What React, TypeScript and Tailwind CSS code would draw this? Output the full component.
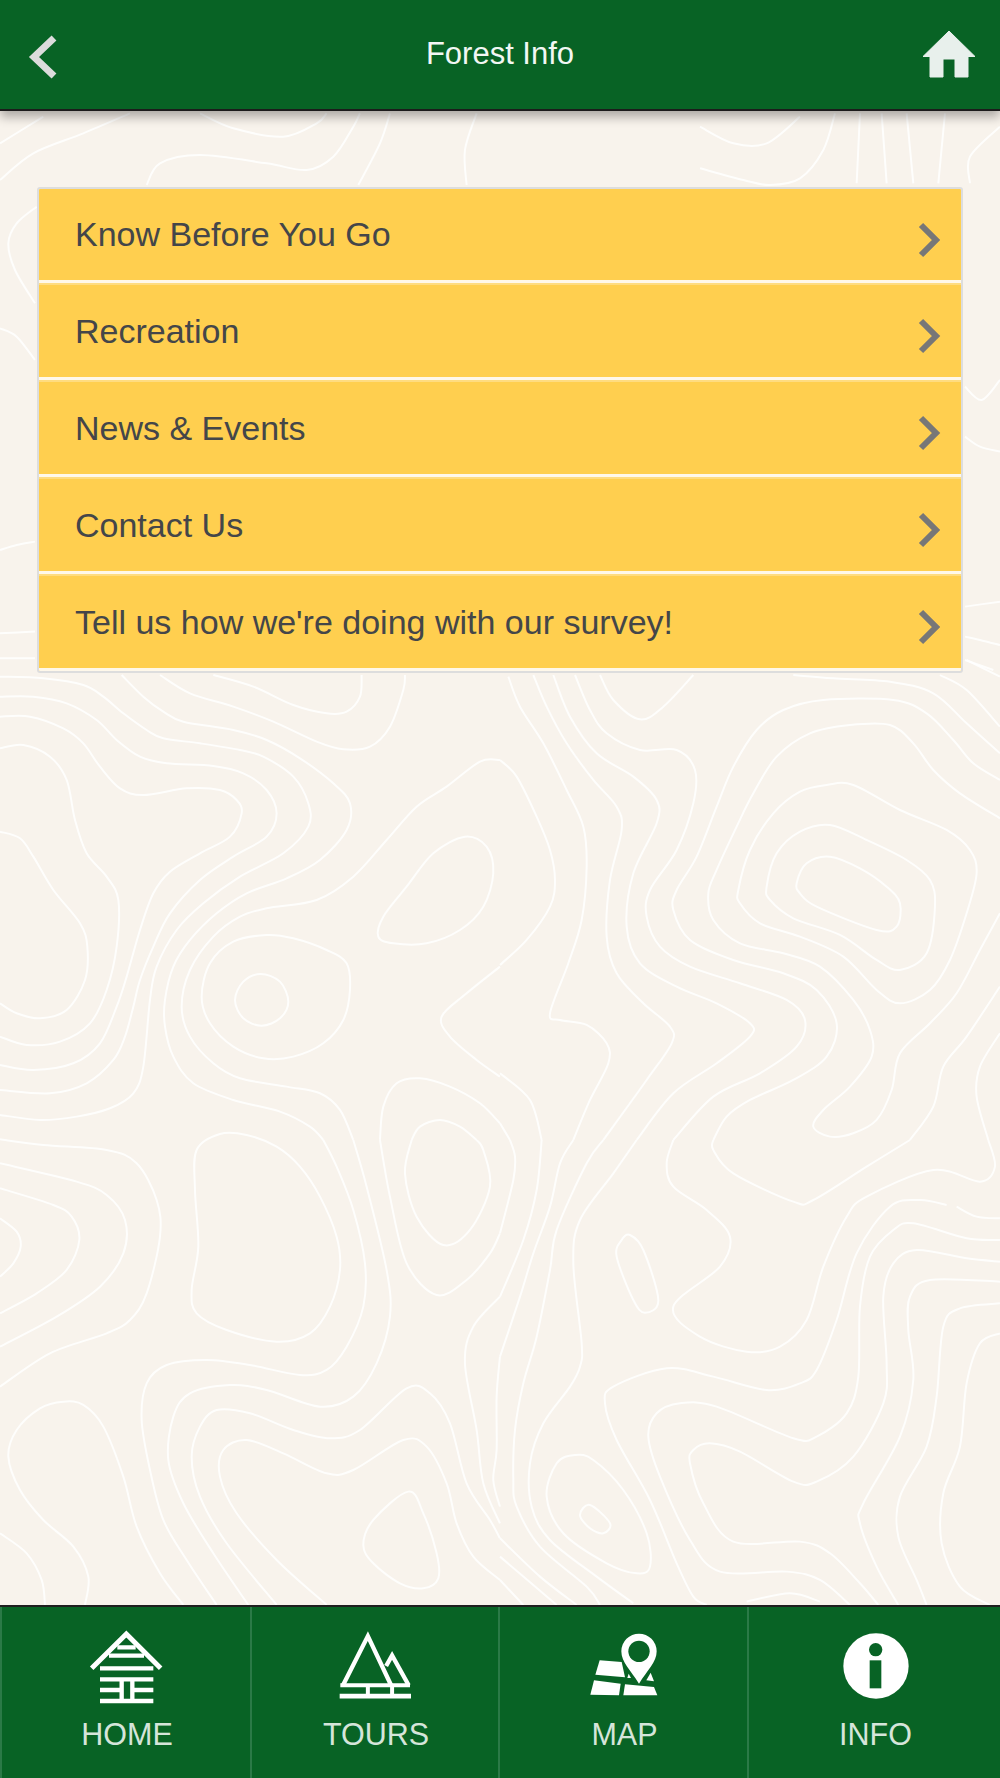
import React from "react";

// contour lines traced from the reference, each crop has its own origin at 1/3 scale
const contours: { x: number; y: number; lines: string[] }[] = [
  {
    x: 0,
    y: 0,
    lines: [
      "0,430 130,350",
      "0,540 100,460 250,400 390,340",
      "600,340 700,385 850,410 950,370 980,340",
      "440,555 480,490 600,465 800,490 920,510 1000,470 1060,380 1080,340",
      "1075,555 1140,430 1170,340",
      "1400,555 1395,450 1430,340",
    ],
  },
  {
    x: 700,
    y: 0,
    lines: [
      "0,380 100,430 200,430 300,350",
      "0,505 130,540 210,555 300,535 370,450 405,340",
      "470,550 480,340",
      "560,550 545,340",
      "640,550 620,340",
      "715,550 735,340",
      "810,550 810,470 900,380",
    ],
  },
  {
    x: 0,
    y: 190,
    lines: [
      "110,50 50,100 25,160 45,240 105,340",
      "0,415 50,440 105,510",
      "0,1080 50,1065 105,1055",
      "0,1330 105,1325",
      "0,1405 105,1405",
    ],
  },
  {
    x: 960,
    y: 190,
    lines: [
      "15,590 65,630 120,570",
      "15,740 60,770 120,785",
      "15,1250 120,1235",
      "15,1340 60,1350 120,1365",
      "15,1410 100,1440",
    ],
  },
  {
    x: 0,
    y: 660,
    lines: [
      "0,50 130,55 250,75 310,110 370,160 440,210 490,235 600,250 720,270 790,290 880,350 925,430 925,500 850,580 720,650 610,730 530,810 470,920 450,1020 430,1220 400,1300 330,1345 230,1370 120,1380 0,1365",
      "0,110 100,110 200,130 290,180 350,240 420,290 500,310 640,318 730,340 800,390 830,460 800,530 700,590 600,660 510,760 460,860 420,960 400,1040 375,1130 340,1200 260,1270 150,1300 0,1290",
      "0,170 90,170 190,205 250,250 300,320 360,385 430,405 560,385 660,390 710,420 725,460 690,530 600,580 510,635 460,700 420,810 380,950 350,1040 300,1150 220,1210 100,1230 0,1215",
      "0,265 70,255 150,290 200,360 225,480 260,580 320,650 355,720 350,860 320,990 270,1090 180,1145 80,1155 0,1130",
      "0,515 60,535 100,590 160,690 240,790 262,860 255,960 200,1050 120,1075 50,1060 0,1030",
      "365,45 430,110 490,155 550,185 700,210 800,240 900,295 1000,370 1050,430 1040,510 960,600 860,655 740,700 650,760 570,840 520,920 495,1020 495,1100 520,1190 580,1270 700,1320 840,1355 930,1400 970,1440",
      "480,45 570,100 700,140 820,185 950,245 1030,268 1110,260 1170,200 1210,90 1215,45",
      "1500,300 1440,305 1340,380 1250,440 1160,540 1060,650 950,720 800,745 720,770 640,830 570,930 545,1040 570,1130 640,1210 720,1255 860,1280 960,1300 1020,1350 1060,1440",
      "640,45 760,80 880,135 980,160 1040,155 1080,110 1085,45",
      "800,825 880,835 980,870 1040,910 1050,990 1030,1080 970,1150 880,1190 790,1195 700,1160 630,1090 605,1010 630,910 700,845 z",
      "782,942 840,965 865,1025 840,1075 785,1097 730,1075 705,1020 730,965 z",
      "1395,530 1460,560 1480,640 1450,740 1380,810 1280,850 1180,850 1135,830 1150,770 1220,680 1300,580 z",
      "1500,920 1400,1000 1325,1070 1350,1130 1430,1200 1500,1250",
      "1140,1440 1150,1340 1190,1270 1260,1255 1350,1280 1440,1330 1500,1390",
      "1235,1440 1260,1400 1320,1380 1380,1400 1430,1440",
    ],
  },
  {
    x: 500,
    y: 660,
    lines: [
      "0,300 50,350 110,470 150,570 165,660 150,740 80,840 0,915",
      "25,50 60,140 130,250 200,390 250,500 260,620 245,780 205,910 150,1060 180,1080 260,1095 320,1150 325,1210 270,1320 220,1440",
      "100,45 140,140 200,250 280,360 350,440 365,510 330,660 320,830 350,940 430,1030 510,1100 515,1150 440,1260 310,1440",
      "160,45 210,170 290,280 400,350 470,420 470,490 400,640 380,800 420,910 530,980 650,1030 750,1090 750,1130 650,1210 520,1300 410,1440",
      "225,45 270,150 320,220 420,270 530,270 585,330 580,430 530,570 450,690 440,770 480,860 570,920 720,970 860,1020 915,1080 890,1160 780,1240 640,1310 520,1440",
      "300,45 340,120 420,178 490,140 580,45",
      "880,45 1000,55 1170,65 1300,100 1400,190 1500,280",
      "1320,45 1400,90 1500,200",
      "1400,0 1500,50",
      "1500,360 1420,310 1360,240 1280,160 1180,120 970,120 850,150 770,210 700,320 650,440 590,590 530,690 520,750 570,840 700,900 850,940 950,990 1010,1090 980,1190 880,1260 750,1320 680,1370 640,1440",
      "1500,475 1380,400 1300,330 1240,250 1170,195 1050,195 930,220 830,290 760,400 710,500 650,630 625,700 640,780 720,850 850,880 960,920 1060,1020 1110,1110 1115,1190 1050,1280 970,1350 940,1400 990,1430 1060,1420 1130,1380 1175,1290 1200,1180 1290,1090 1370,1000 1440,870 1500,760",
      "715,690 750,570 820,460 900,395 980,375 1060,375 1200,450 1340,510 1410,570 1430,640 1400,760 1350,900 1290,990 1200,1030 1130,990 1030,890 900,830 780,790 720,730 z",
      "800,680 830,580 900,515 990,495 1100,540 1220,600 1290,660 1305,740 1280,880 1200,930 1130,900 1020,825 880,775 810,720 z",
      "890,670 920,610 990,590 1080,625 1160,680 1200,730 1190,800 1130,810 950,740 900,700 z",
      "1500,980 1400,1130 1330,1220 1300,1340 1230,1440",
      "1500,1120 1440,1220 1430,1310 1465,1440",
      "0,1240 90,1320 125,1440",
      "0,1390 30,1440",
    ],
  },
  {
    x: 0,
    y: 1130,
    lines: [
      "0,28 130,45 320,60 410,100 470,210 480,320 440,490 390,570 320,610 150,670 0,770",
      "0,100 230,155 320,195 375,270 370,370 300,470 170,560 0,650",
      "0,175 160,225 215,260 238,330 200,420 110,490 0,550",
      "0,265 50,305 62,350 40,400 0,440",
      "660,12 740,15 830,50 900,110 960,200 1010,320 1020,420 990,530 930,610 830,635 680,600 590,550 575,480 595,350 585,180 590,60 z",
      "970,30 1010,110 1060,240 1095,400 1090,530 1040,650 980,720 900,735 750,705 620,690 500,705 440,760 425,870 450,1020 490,1170 560,1290 650,1425",
      "1060,30 1100,170 1160,420 1170,560 1130,700 1060,800 960,830 800,780 690,765 570,790 520,860 505,990 550,1120 640,1270 745,1425",
      "1140,30 1170,200 1220,400 1310,495 1400,450 1470,370 1500,310",
      "1235,30 1215,130 1250,260 1330,345 1410,300 1470,170 1450,60 1430,30",
      "1500,1225 1470,1170 1400,1060 1350,880 1290,790 1220,775 1080,900 990,925 880,900 750,850 650,840 600,890 575,980 600,1100 680,1240 830,1425",
      "1500,1350 1420,1280 1370,1180 1340,1060 1280,950 1210,930 1060,1020 980,1030 850,970 740,930 670,960 660,1040 710,1150 830,1290 980,1425",
      "1225,1085 1270,1150 1310,1270 1315,1345 1270,1375 1200,1360 1120,1300 1090,1245 1120,1170 z",
      "255,1425 265,1340 220,1250 130,1170 60,1080 25,980 50,900 120,835 190,815 250,825 310,890 370,1040 410,1190 480,1330 550,1425",
      "0,1210 80,1270 125,1350 135,1425",
      "1500,500 1420,590 1395,700 1430,900 1450,1060 1500,1180",
      "1500,680 1490,800 1490,960 1480,1050 1500,1130",
    ],
  },
  {
    x: 500,
    y: 1130,
    lines: [
      "0,310 40,150 45,80 30,30",
      "125,30 110,180 70,330 0,500",
      "220,30 180,100 150,230 100,370 60,500 0,680",
      "310,30 260,100 170,300 150,420 110,620 70,760 45,900 40,1050 50,1130 120,1250 260,1370 300,1425",
      "410,30 340,130 240,270 220,400 245,640 240,710 210,770 130,880 90,1000 95,1130 150,1230 290,1340 400,1420",
      "520,30 500,100 520,170 620,240 690,320 660,410 520,530 600,620 740,665 840,650 920,570 970,410 1040,260 1100,200 1300,120 1440,155 1485,110 1465,30",
      "640,30 640,60 700,130 880,215 940,210 1100,110 1230,30",
      "620,1425 580,1400 530,1300 450,1110 350,930 315,820 340,770 500,715 640,740 800,780 900,760 950,720 1010,570 1070,370 1170,230 1260,210 1340,225",
      "1370,230 1430,260 1500,265",
      "1050,1425 960,1350 860,1325 660,1325 570,1230 480,1040 445,920 470,850 540,820 650,830 880,925 950,920 1040,850 1075,740 1080,530 1110,380 1180,300 1240,280 1400,325 1500,330",
      "1135,1425 1080,1360 990,1270 900,1235 700,1235 610,1120 570,1000 580,960 630,940 720,965 880,1055 950,1055 1060,980 1150,820 1160,700 1150,500 1180,400 1250,360 1400,385 1500,395",
      "1500,455 1290,450 1230,500 1225,600 1240,750 1200,920 1090,1120 1080,1180 1130,1310 1195,1425",
      "1500,520 1380,535 1330,590 1310,800 1280,950 1200,1100 1195,1220 1250,1350 1280,1425",
      "1500,610 1440,640 1400,760 1380,950 1330,1090 1325,1240 1380,1370 1470,1425",
      "390,315 430,360 475,510 435,548 400,510 350,380 365,330 z",
      "225,975 280,990 370,1080 440,1210 450,1310 410,1330 320,1300 190,1210 140,1100 170,1000 z",
      "270,1125 330,1180 310,1210 270,1195 240,1155 z",
      "0,1225 120,1340 230,1425",
      "0,1280 170,1425",
      "0,1350 70,1425",
      "740,1415 870,1390 960,1415",
    ],
  },
];

// catmull-rom through the traced points
function smooth(line: string) {
  const closed = line.endsWith("z");
  const p = line
    .replace("z", "")
    .trim()
    .split(" ")
    .map((s) => s.split(",").map(Number));
  const at = (i: number) =>
    closed ? p[(i + p.length) % p.length] : p[Math.max(0, Math.min(p.length - 1, i))];
  let d = `M${p[0][0]} ${p[0][1]}`;
  const n = closed ? p.length : p.length - 1;
  for (let i = 0; i < n; i++) {
    const [a, b, c, e] = [at(i - 1), at(i), at(i + 1), at(i + 2)];
    d += `C${b[0] + (c[0] - a[0]) / 6} ${b[1] + (c[1] - a[1]) / 6} ${c[0] - (e[0] - b[0]) / 6} ${c[1] - (e[1] - b[1]) / 6} ${c[0]} ${c[1]}`;
  }
  return closed ? d + "Z" : d;
}

const Topo = () => (
  <svg viewBox="0 0 1000 1778" className="absolute inset-0 w-[1000px] h-[1778px]" fill="none">
    {contours.map((c) => (
      <g key={`${c.x}-${c.y}`} transform={`translate(${c.x} ${c.y}) scale(0.3333)`}>
        {c.lines.map((l) => (
          <path key={l} d={smooth(l)} stroke="#fff" strokeOpacity={0.85} strokeWidth={6} />
        ))}
      </g>
    ))}
  </svg>
);

const items = [
  "Know Before You Go",
  "Recreation",
  "News & Events",
  "Contact Us",
  "Tell us how we're doing with our survey!",
];

const CabinIcon = () => (
  <svg viewBox="270 120 222 225" className="w-[74px] h-[75px]" fill="none" stroke="#fff">
    <path d="M278 235L382 132L485 235" strokeWidth={15} />
    <path
      d="M355 172H410M330 197H435M303 235H463M303 268H463M303 300H368M400 300H463M303 333H463M368 268V333M400 268V333"
      strokeWidth={13}
    />
  </svg>
);

const TreesIcon = () => (
  <svg viewBox="1018 122 220 210" className="w-[73px] h-[70px]" fill="none" stroke="#fff">
    <path d="M1030 288L1105 140L1175 288" strokeWidth={13} />
    <path d="M1160 230L1178 198L1228 288" strokeWidth={13} />
    <path d="M1022 288H1232M1105 288V321M1178 288V321" strokeWidth={12} />
    <path d="M1020 321H1235" strokeWidth={14} />
  </svg>
);

const MapIcon = () => (
  <svg viewBox="270 130 210 195" className="w-[70px] h-[65px] mt-[2px]">
    <path d="M302 215L368 220L378 266L289 258Z" fill="#fff" />
    <path d="M285 275L365 285L360 320L274 318Z" fill="#fff" />
    <path d="M378 287L465 295L475 320L373 320Z" fill="#fff" />
    <path d="M385 268L396 268L389 255Z" fill="#fff" />
    <path d="M442 275L465 278L455 252Z" fill="#fff" />
    <path
      d="M420 285C395 245 367 220 367 188A53 53 0 0 1 473 188C473 220 445 245 420 285Z"
      fill="#fff"
    />
    <circle cx="420" cy="188" r="32" fill="#086325" />
  </svg>
);

const InfoIcon = () => (
  <svg viewBox="1035 130 198 198" className="w-[66px] h-[66px] mt-[3px] ml-[3px]">
    <circle cx="1134" cy="229" r="98" fill="#fff" />
    <circle cx="1133" cy="180" r="20" fill="#086325" />
    <rect x="1115" y="212" width="35" height="84" fill="#086325" />
  </svg>
);

const tabs = [
  { label: "HOME", icon: <CabinIcon />, w: "w-[250px]" },
  { label: "TOURS", icon: <TreesIcon />, w: "w-[248px]" },
  { label: "MAP", icon: <MapIcon />, w: "w-[249px]" },
  { label: "INFO", icon: <InfoIcon />, w: "w-[253px]" },
];

export default function App() {
  return (
    <div
      className="relative w-[1000px] h-[1778px] flex flex-col overflow-hidden bg-[#f8f3ec]"
      style={{ fontFamily: '"Liberation Sans", Arial, sans-serif' }}
    >
      <Topo />

      <header className="relative h-[111px] shrink-0 flex items-center bg-[#086325] border-b-2 border-[#1c1c1c] shadow-[0_6px_10px_rgba(0,0,0,0.3)]">
        <div className="w-[100px] pl-[26px] flex">
          <svg viewBox="0 0 34 46" className="w-[34px] h-[46px] mt-[4px]" fill="none">
            <path d="M28 4L8 23L28 42" stroke="#dcdcdc" strokeWidth={7} />
          </svg>
        </div>
        <h1 className="flex-1 text-center text-[31px] text-[#f2f7f4] font-normal">Forest Info</h1>
        <div className="w-[100px] pr-[24px] flex justify-end">
          <svg viewBox="0 0 54 49" className="w-[54px] h-[49px]">
            <path
              d="M27 1L53 26.5H46V47H33V29H21V47H8V26.5H1Z"
              fill="#e8f0ec"
              stroke="#e8f0ec"
              strokeLinejoin="round"
            />
          </svg>
        </div>
      </header>

      <main className="relative flex-1 px-[37px] pt-[76px]">
        <ul className="rounded-[3px] border-2 border-[#dddddd] overflow-hidden">
          {items.map((item, i) => (
            <li
              key={item}
              className={
                i === 0
                  ? "h-[94px] flex items-center justify-between pl-[36px] pr-[19px] bg-[#ffcf4f] border-b-[3px] border-[#fff8ea]"
                  : "h-[97px] flex items-center justify-between pl-[36px] pr-[19px] bg-[#ffcf4f] border-t-2 border-b-[3px] border-t-[#ffdc80] border-b-[#fff8ea]"
              }
            >
              <span className="text-[34px] text-[#444649]">{item}</span>
              <svg viewBox="0 0 24 36" className="w-[24px] h-[36px] mt-[10px]" fill="none">
                <path d="M3 3L18 18L3 33" stroke="#777777" strokeWidth={6} />
              </svg>
            </li>
          ))}
        </ul>
      </main>

      <nav className="relative h-[173px] shrink-0 flex bg-[#086325] border-t-2 border-[#1f1f1f]">
        {tabs.map((t) => (
          <div
            key={t.label}
            className={`${t.w} flex flex-col items-center border-l-2 border-[#2b7a47]`}
          >
            <div className="h-[87px] mt-[23px] flex items-start justify-center">{t.icon}</div>
            <span className="text-[30.5px] leading-[34px] pl-[2px] text-[#d5e5da]">{t.label}</span>
          </div>
        ))}
      </nav>
    </div>
  );
}
